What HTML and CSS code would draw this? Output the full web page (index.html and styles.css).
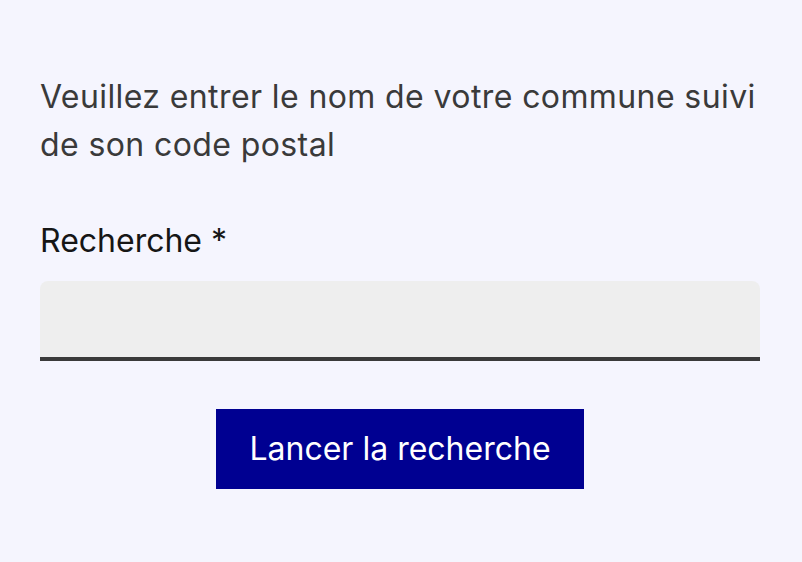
FILE: index.html
```html
<!DOCTYPE html>
<html lang="fr">
<head>
<meta charset="utf-8">
<title>Recherche</title>
<link rel="stylesheet" href="styles.css">
</head>
<body>
<main class="page">
  <form class="form">
    <p class="intro">Veuillez entrer le nom de votre commune suivi de son code postal</p>
    <div class="group">
      <label class="label" for="q">Recherche <span class="req">*</span></label>
      <input class="input" id="q" type="text">
    </div>
    <div class="actions">
      <button class="btn" type="button">Lancer la recherche</button>
    </div>
  </form>
</main>
</body>
</html>
```
FILE: styles.css
```css
html, body {
  margin: 0;
  padding: 0;
  background: #f5f5fe;
}
body {
  font-family: Inter, "Noto Sans", sans-serif;
  color: #161616;
}
.page {
  padding: 73px 42px 0 40px;
}
.form {
  display: flex;
  flex-direction: column;
}
.intro {
  margin: 0;
  font-size: 32px;
  line-height: 48px;
  letter-spacing: 0.4px;
  color: #3a3a3a;
}
.group {
  margin-top: 48px;
  display: flex;
  flex-direction: column;
}
.label {
  font-size: 32px;
  line-height: 48px;
  color: #161616;
}
.input {
  margin-top: 16px;
  height: 80px;
  box-sizing: border-box;
  border: none;
  border-radius: 8px 8px 0 0;
  box-shadow: inset 0 -4px 0 0 #3a3a3a;
  background: #eeeeee;
  font: inherit;
  font-size: 32px;
  padding: 0 32px;
  outline: none;
}
.actions {
  display: flex;
  justify-content: center;
  margin-top: 48px;
}
.btn {
  width: 368px;
  height: 80px;
  border: none;
  border-radius: 0;
  background: #000091;
  color: #ffffff;
  font-family: inherit;
  font-size: 32px;
  line-height: 48px;
  padding: 0;
}
```
